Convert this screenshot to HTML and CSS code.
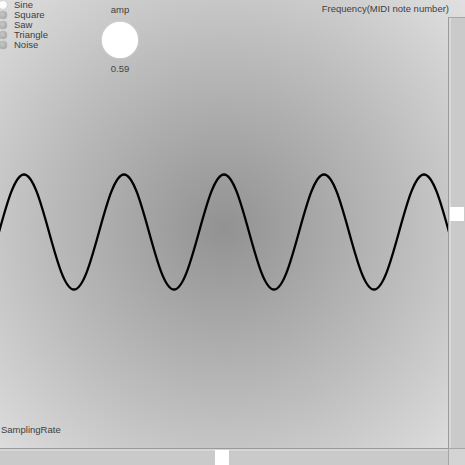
FILE: index.html
```html
<!DOCTYPE html>
<html>
<head>
<meta charset="utf-8">
<link rel="stylesheet" href="styles.css">
</head>
<body>
<div class="app">
  <div class="canvas">
    <svg class="wave" width="448" height="448" viewBox="0 0 448 448">
      <path d="M-1,232
        c8.153,-29.46 15.95,-57.5 25,-57.5 c9.05,0 16.847,28.04 25,57.5 c8.153,29.46 15.95,57.5 25,57.5 c9.05,0 16.847,-28.04 25,-57.5
        c8.153,-29.46 15.95,-57.5 25,-57.5 c9.05,0 16.847,28.04 25,57.5 c8.153,29.46 15.95,57.5 25,57.5 c9.05,0 16.847,-28.04 25,-57.5
        c8.153,-29.46 15.95,-57.5 25,-57.5 c9.05,0 16.847,28.04 25,57.5 c8.153,29.46 15.95,57.5 25,57.5 c9.05,0 16.847,-28.04 25,-57.5
        c8.153,-29.46 15.95,-57.5 25,-57.5 c9.05,0 16.847,28.04 25,57.5 c8.153,29.46 15.95,57.5 25,57.5 c9.05,0 16.847,-28.04 25,-57.5
        c8.153,-29.46 15.95,-57.5 25,-57.5 c9.05,0 16.847,28.04 25,57.5" />
    </svg>
    <div class="top">
      <ul class="radios">
        <li class="radio selected"><span class="dot"></span><span>Sine</span></li>
        <li class="radio"><span class="dot"></span><span>Square</span></li>
        <li class="radio"><span class="dot"></span><span>Saw</span></li>
        <li class="radio"><span class="dot"></span><span>Triangle</span></li>
        <li class="radio"><span class="dot"></span><span>Noise</span></li>
      </ul>
      <div class="knob">
        <div class="knob-label">amp</div>
        <div class="knob-circle"></div>
        <div class="knob-value">0.59</div>
      </div>
      <div class="freq">Frequency(MIDI note number)</div>
    </div>
    <div class="sampling">SamplingRate</div>
  </div>
  <div class="vslider"><div class="handle vhandle"></div></div>
  <div class="hslider"><div class="handle hhandle"></div></div>
  <div class="corner"></div>
</div>
</body>
</html>
```
FILE: styles.css
```css
html, body {
  margin: 0;
  padding: 0;
}
body {
  font-family: "Liberation Sans", Arial, sans-serif;
  font-size: 9.5px;
  line-height: 10px;
  color: #404040;
}
.app {
  width: 465px;
  height: 465px;
  display: grid;
  grid-template-columns: 448px 17px;
  grid-template-rows: 448px 17px;
  background: radial-gradient(circle farthest-corner at 224px 228px, #929292 0%, #bdbdbd 55%, #e2e2e2 100%);
  overflow: hidden;
}
.canvas {
  position: relative;
  display: flex;
  flex-direction: column;
}
.wave {
  position: absolute;
  left: 0;
  top: 0;
}
.wave path {
  fill: none;
  stroke: #000;
  stroke-width: 2.3;
  stroke-linecap: round;
}
.top {
  position: relative;
  display: flex;
  align-items: flex-start;
}
.radios {
  list-style: none;
  margin: 0;
  padding: 0;
  width: 100px;
}
.radio {
  display: flex;
  align-items: center;
  height: 10px;
}
.dot {
  width: 8px;
  height: 8px;
  border-radius: 50%;
  margin: 0 7px 0 -1px;
  background: radial-gradient(circle at 40% 40%, #c8c8c8 0%, #a9a9a9 70%, #9c9c9c 100%);
  box-shadow: 0 0 1px rgba(0,0,0,0.25);
}
.radio.selected .dot {
  background: radial-gradient(circle at 45% 45%, #ffffff 0%, #fafafa 60%, #dcdcdc 100%);
}
.knob {
  width: 40px;
  display: flex;
  flex-direction: column;
  align-items: center;
  padding-top: 5px;
}
.knob-circle {
  width: 36px;
  height: 36px;
  border-radius: 50%;
  margin-top: 7px;
  background: #ffffff;
  box-shadow: 0 0 1.5px rgba(255,255,255,0.9);
}
.knob-value {
  margin-top: 6px;
  color: #444;
}
.freq {
  margin-left: auto;
  margin-right: -1px;
  padding-top: 4px;
}
.sampling {
  position: relative;
  margin-top: auto;
  margin-bottom: 13px;
  padding-left: 1px;
}
.vslider {
  margin-top: 17px;
  background: #cacaca;
  border-left: 1px solid #9a9a9a;
  border-top: 1px solid #a8a8a8;
  box-shadow: inset 2px 0 0 #d8d8d8;
  padding-left: 1px;
}
.hslider {
  background: #cacaca;
  border-top: 1px solid #9a9a9a;
  box-shadow: inset 0 2px 0 #d6d6d6;
  padding-top: 1px;
}
.corner {
  background: #d4d4d4;
  border-top: 1px solid #a5a5a5;
  border-left: 1px solid #a5a5a5;
}
.handle {
  background: #ffffff;
}
.vhandle {
  width: 14px;
  height: 14px;
  margin-top: 189px;
}
.hhandle {
  width: 14px;
  height: 16px;
  margin-left: 215px;
}
```
